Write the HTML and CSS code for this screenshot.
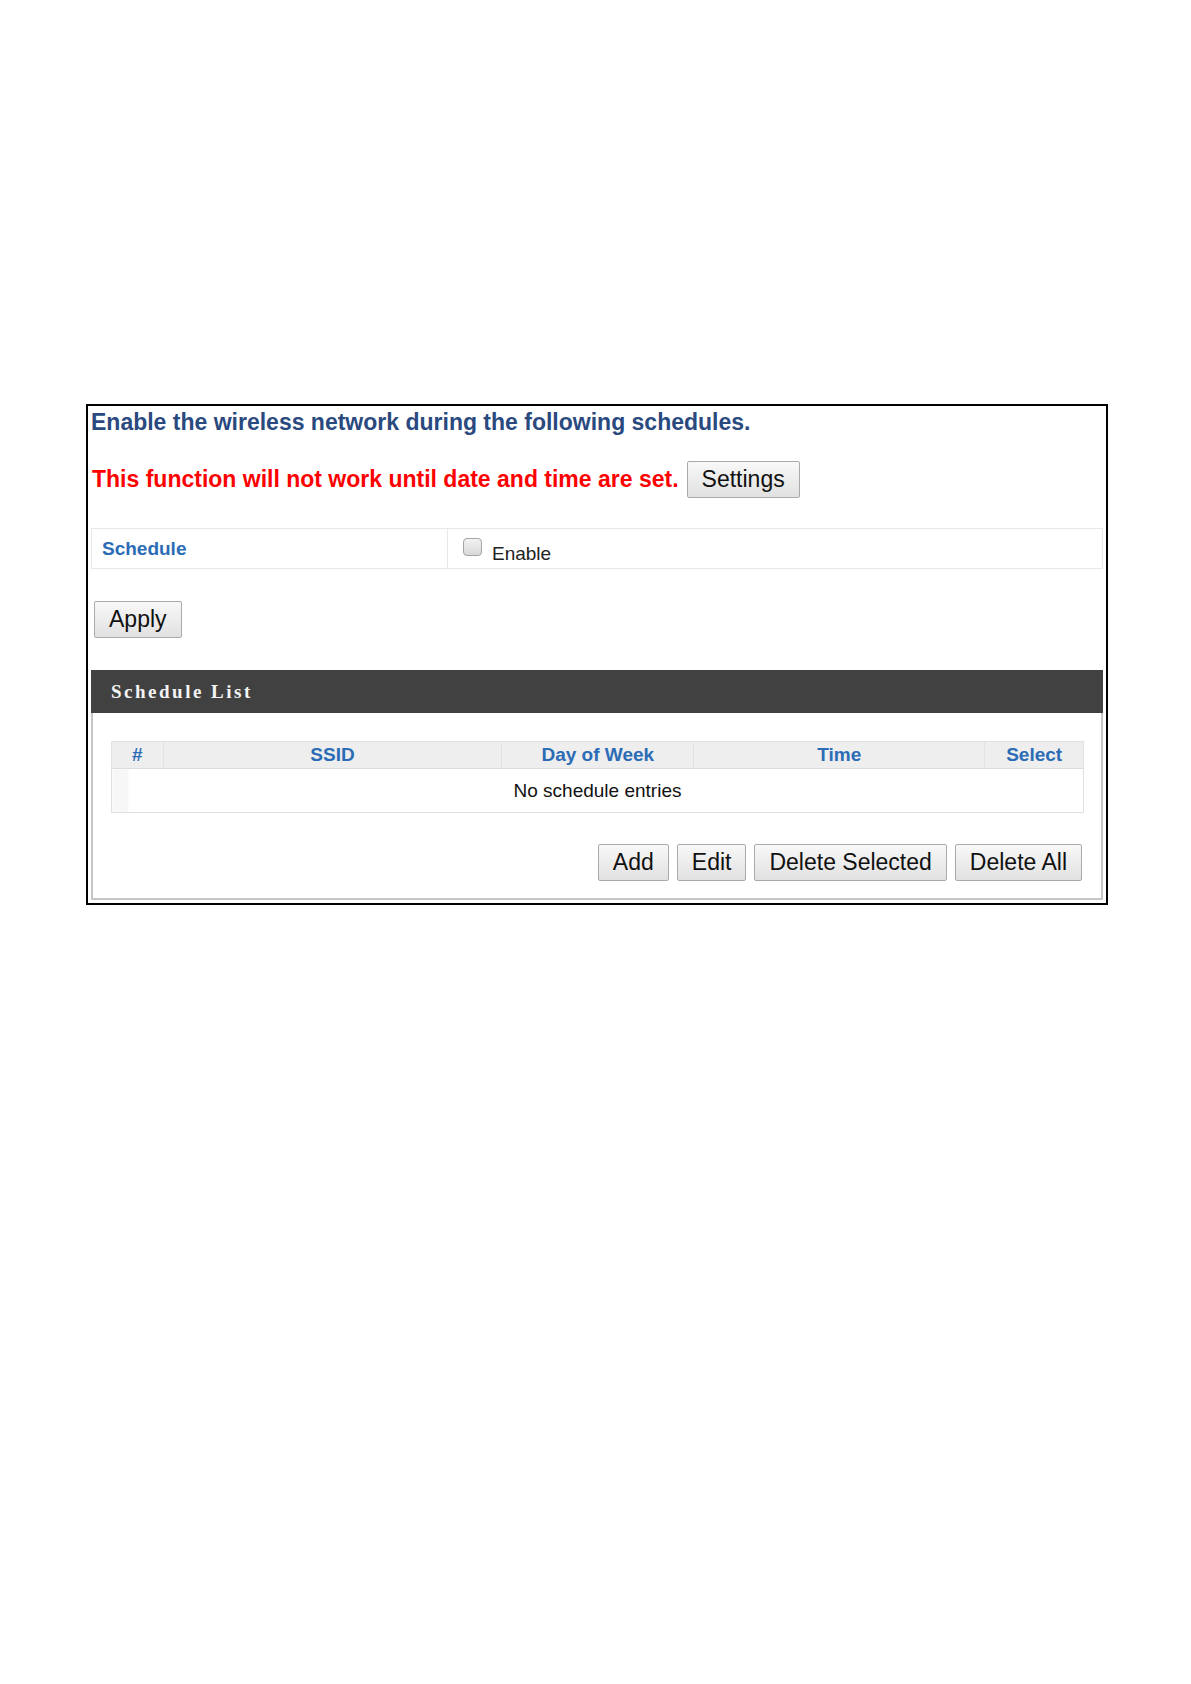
FILE: index.html
```html
<!DOCTYPE html>
<html lang="en">
<head>
  <meta charset="UTF-8">
  <title>Schedule</title>
  <link rel="stylesheet" href="styles.css">
</head>
<body>

  <div class="page">
    <div class="box">

      <!-- Açıklama -->
      <h2 class="title">Enable the wireless network during the following schedules.</h2>

      <div class="warn">
        <span class="warn-text">This function will not work until date and time are set.</span>
        <button type="button" class="btn">Settings</button>
      </div>

      <!-- Schedule ayarı -->
      <table class="form-table">
        <tr>
          <td class="label">Schedule</td>
          <td class="field">
            <div class="field-row">
              <input type="checkbox" class="check" id="schEnable">
              <label for="schEnable" class="check-text">Enable</label>
            </div>
          </td>
        </tr>
      </table>

      <button type="button" class="btn apply">Apply</button>

      <!-- Schedule List -->
      <div class="panel">
        <div class="panel-head">Schedule List</div>
        <div class="panel-body">
          <table class="list">
            <tr>
              <th class="c-no">#</th>
              <th class="c-ssid">SSID</th>
              <th class="c-day">Day of Week</th>
              <th class="c-time">Time</th>
              <th class="c-sel">Select</th>
            </tr>
            <tr>
              <td colspan="5" class="empty">No schedule entries</td>
            </tr>
          </table>
          <div class="actions">
            <button type="button" class="btn">Add</button>
            <button type="button" class="btn">Edit</button>
            <button type="button" class="btn">Delete Selected</button>
            <button type="button" class="btn">Delete All</button>
          </div>
        </div>
      </div>

    </div>
  </div>

</body>
</html>
```

FILE: styles.css
```css
body {
  margin: 0;
  background: #fff;
  font-family: "Liberation Sans", Arial, sans-serif;
  color: #111;
}
.page {
  padding: 404px 0 0 86px;
}
.box {
  width: 1022px;
  box-sizing: border-box;
  border: 2px solid #000;
  padding: 3px 3px 3px 3px;
}
.title {
  margin: 0;
  font-size: 23px;
  line-height: 26px;
  font-weight: bold;
  color: #2a4a7f;
}
/* uyarı satırı */
.warn {
  display: flex;
  align-items: center;
  margin-top: 26px;
  padding-left: 1px;
}
.warn-text {
  font-size: 23px;
  font-weight: bold;
  color: #f00;
  margin-right: 8px;
}
.btn {
  height: 37px;
  padding: 0 14px;
  font-family: "Liberation Sans", Arial, sans-serif;
  font-size: 23px;
  color: #111;
  background: linear-gradient(#f8f8f8, #e1e1e1);
  border: 1px solid #aaa;
  border-radius: 2px;
  box-sizing: border-box;
}
.form-table {
  width: 100%;
  margin-top: 30px;
  border-collapse: collapse;
}
.form-table td {
  height: 39px;
  border: 1px solid #e8e8e8;
  padding: 0;
}
.form-table .label {
  width: 345px;
  padding-left: 10px;
  font-size: 19px;
  font-weight: bold;
  color: #2b6cb6;
  vertical-align: middle;
}
.form-table .field {
  vertical-align: top;
  padding-left: 15px;
}
.field-row {
  display: flex;
  align-items: flex-start;
}
.check {
  -webkit-appearance: none;
  appearance: none;
  width: 19px;
  height: 18px;
  margin: 9px 10px 0 0;
  border: 1px solid #a5a5a5;
  border-radius: 4px;
  background: linear-gradient(#f2f2f2, #d8d8d8);
  box-sizing: border-box;
}
.check-text {
  margin-top: 14px;
  font-size: 19px;
  line-height: 22px;
  color: #222;
}
.apply {
  display: block;
  margin: 32px 0 0 3px;
}
/* Schedule List paneli */
.panel {
  margin-top: 32px;
  border: 2px solid #c6c6c6;
  border-top: 0;
}
.panel-head {
  height: 43px;
  margin: 0 -2px;
  padding-left: 20px;
  display: flex;
  align-items: center;
  background: #404140;
  color: #f4f4f4;
  font-family: "Liberation Serif", "Times New Roman", serif;
  font-size: 19px;
  font-weight: bold;
  letter-spacing: 2.5px;
}
.panel-body {
  padding: 28px 17px 17px 18px;
}
.list {
  width: 973px;
  border-collapse: collapse;
  border: 1px solid #e0e0e0;
}
.list th {
  height: 26px;
  padding: 0;
  background: #eeeeee;
  border-left: 1px solid #e2e2e2;
  border-bottom: 1px solid #dcdcdc;
  font-size: 19px;
  font-weight: bold;
  color: #2b6cb6;
  text-align: center;
}
.list .c-no { width: 51px; }
.list .c-ssid { width: 340px; }
.list .c-day { width: 192px; }
.list .c-time { width: 292px; }
.list .c-sel { width: 98px; }
.list .empty {
  height: 43px;
  padding: 0;
  text-align: center;
  font-size: 19px;
  color: #111;
  background: linear-gradient(to right, #f7f7f7 16px, #fff 16px);
}
.actions {
  display: flex;
  justify-content: flex-end;
  gap: 8px;
  margin-top: 31px;
  padding-right: 2px;
}
```
